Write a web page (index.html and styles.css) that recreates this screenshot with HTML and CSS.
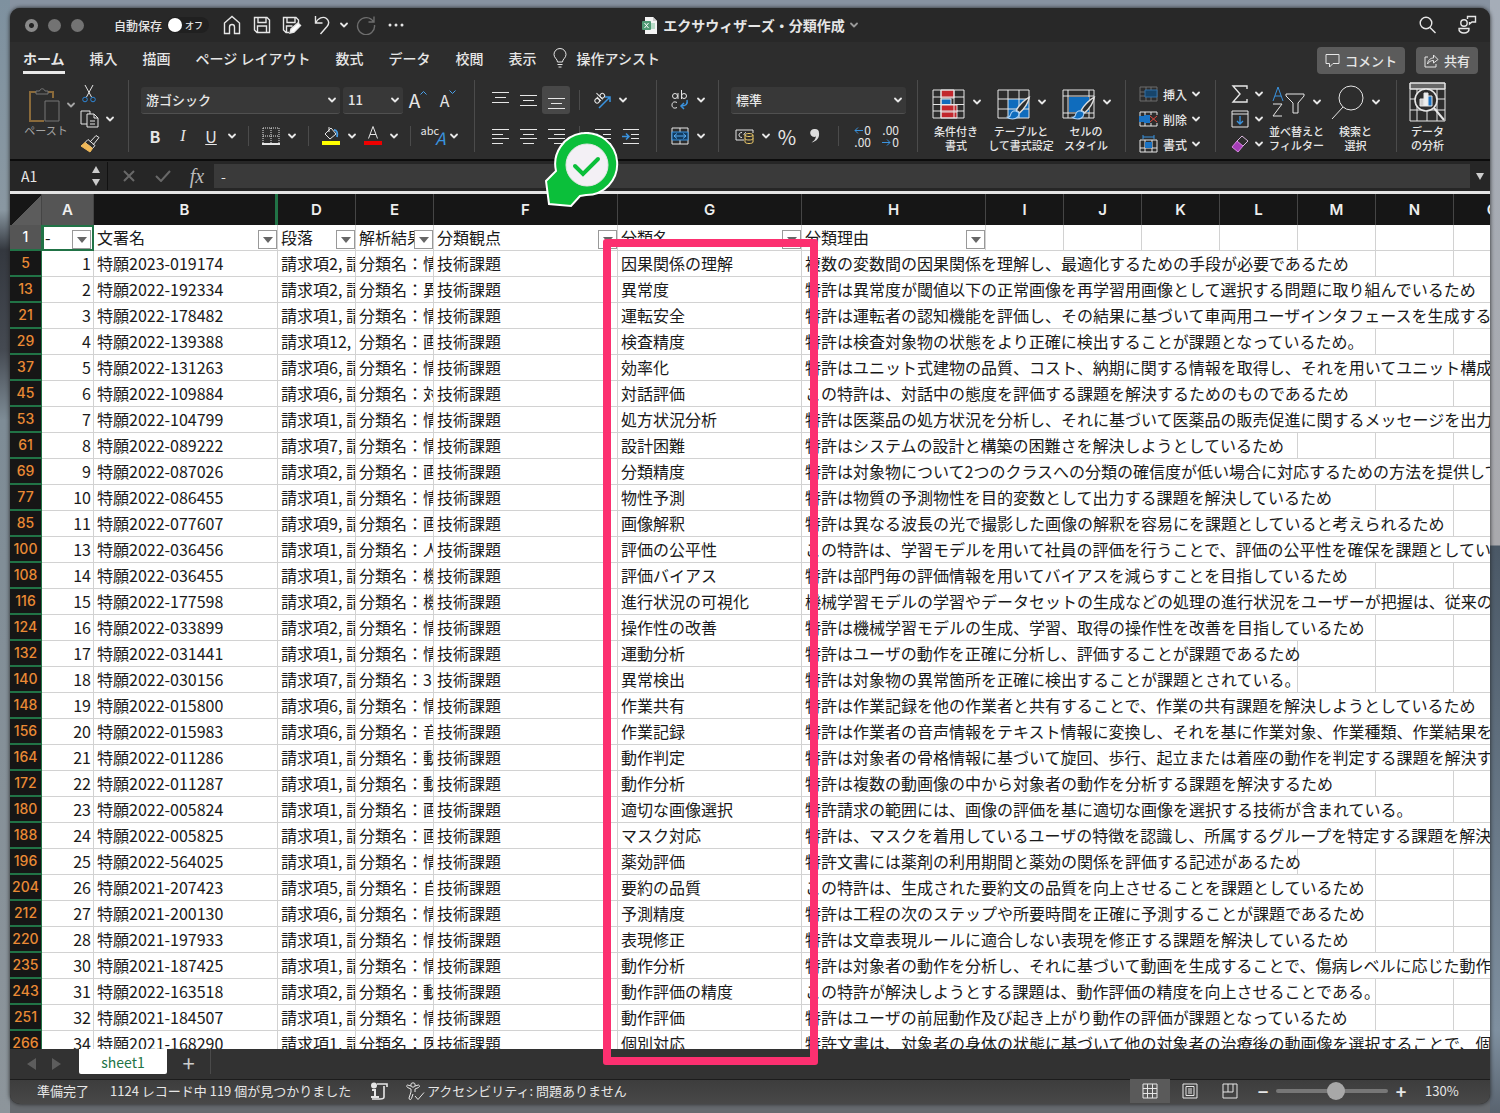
FILE: index.html
```html
<!DOCTYPE html>
<html lang="ja">
<head>
<meta charset="utf-8">
<title>エクサウィザーズ・分類作成</title>
<link rel="stylesheet" href="styles.css">
</head>
<body>
<svg class="defs" aria-hidden="true">
  <symbol id="chev" viewBox="0 0 8 8"><path d="M1 2.5 4 5.5 7 2.5" fill="none" stroke="currentColor" stroke-width="1.8" stroke-linecap="round" stroke-linejoin="round"/></symbol>
  <symbol id="brush" viewBox="0 0 24 24"><path d="M22 2C18 4 12 10 10 14l3 2.500C17 13 21 7 22 2Z" fill="#2d2d2d" stroke="#ddd" stroke-width="1.300"/><path d="M9 14.500c-3 0-4 2-4.500 4-.3 1.500-1.500 2-3 2 2 2 8 2.500 10-.5 1-1.500 1-3 .5-4Z" fill="#0f6cbd" stroke="#a9d0f5" stroke-width="1"/></symbol>
</svg>
<div class="window">
  <header class="titlebar">
    <div class="title-left">
      <div class="lights"><span></span><span></span><span></span></div>
      <label class="autosave">自動保存<span class="toggle"><input type="checkbox"><i></i><small>オフ</small></span></label>
      <button class="tool" aria-label="ホーム画面"><svg width="18" height="20" viewBox="0 0 18 20"><path d="M1.500 8 9 1.500 16.500 8v10.500h-5V12a2.500 2.500 0 0 0-5 0v6.500h-5Z"/></svg></button>
      <button class="tool" aria-label="保存"><svg width="18" height="18" viewBox="0 0 18 18"><path d="M1.500 1.500H14L16.500 4v12.500H4L1.500 14ZM5 1.500v5h8v-5M4.500 16.500V10h9v6.500"/></svg></button>
      <button class="tool" aria-label="名前を付けて保存"><svg width="20" height="18" viewBox="0 0 20 18"><path d="M7 16.500H4L1.500 14V1.500H14L16.500 4v3M5 1.500v5h8v-5M4.500 16V10h6"/><path d="m8 17 1-4 7-6 2.500 2.500-6.500 6.500Z" fill="#fff"/></svg></button>
      <button class="tool" aria-label="元に戻す"><svg width="16" height="20" viewBox="0 0 16 20"><path d="M1.500 1v7H8.500M1.500 8C4 3 9 1 12.500 3.500c3 2.500 2.500 5.500.5 8L6.500 19"/></svg></button>
      <button class="ch" aria-label="履歴"><svg><use href="#chev"/></svg></button>
      <button class="tool dim" aria-label="やり直し"><svg width="20" height="20" viewBox="0 0 20 20"><path d="M18 1.500V7h-5.500M17.500 7A8.500 8.500 0 1 0 18.500 10"/></svg></button>
      <button class="tool" aria-label="その他"><svg width="16" height="4" viewBox="0 0 16 4"><path d="M2 2h.01M8 2h.01M14 2h.01" stroke-width="3" stroke-linecap="round"/></svg></button>
    </div>
    <h1><svg width="16" height="17" viewBox="0 0 16 17"><path d="M3 0h8l4 4v13H3Z" fill="#f4f4f4"/><path d="M11 0v4h4" fill="#ccc"/><path d="M5 6h8v6H5Z" fill="#b9dcc8"/><rect y="4" width="9" height="9" rx="1" fill="#4f9a74"/><path d="m2.500 6 4 5m0-5-4 5" stroke="#fff"/></svg>エクサウィザーズ・分類作成<svg class="c"><use href="#chev"/></svg></h1>
    <div class="title-right">
      <button class="tool" aria-label="検索"><svg width="18" height="18" viewBox="0 0 18 18"><circle cx="7" cy="7" r="5.800"/><path d="m11 11.500 5.500 5.500"/></svg></button>
      <button class="tool" aria-label="プレゼンス"><svg width="20" height="20" viewBox="0 0 20 20"><circle cx="7" cy="8" r="3.200"/><path d="M2 13.500h10c1 6-11 6-10 0ZM10.500 4V1.500h8V7H15l-2.500 2V7"/></svg></button>
    </div>
  </header>

  <nav class="tabs">
    <a href="#" class="on">ホーム</a><a href="#">挿入</a><a href="#">描画</a><a href="#">ページ レイアウト</a><a href="#">数式</a><a href="#">データ</a><a href="#">校閲</a><a href="#">表示</a>
    <a href="#" class="assist"><svg width="14" height="20" viewBox="0 0 14 20"><path d="M4.500 14c0-3-3.500-4-3.500-7.500a6 6 0 0 1 12 0C13 10 9.500 11 9.500 14ZM4.500 16.500h5M5.500 19h3"/></svg>操作アシスト</a>
    <div class="actions">
      <button class="act"><svg width="15" height="15" viewBox="0 0 15 15"><path d="M1 1.500h13v9H8L4.500 14v-3.500H1Z"/></svg>コメント</button>
      <button class="act"><svg width="15" height="15" viewBox="0 0 15 15"><path d="M4 4H1v10h11v-3M3.500 11C4 7 6.500 5 9.500 5V2l4.500 4.500L9.500 10V7.500C7 7.500 5 8.500 3.500 11Z"/></svg>共有</button>
    </div>
  </nav>

  <section class="ribbon">
    <div class="group clip">
      <button class="paste"><span><svg width="34" height="35" viewBox="0 0 34 35"><path d="M8 4H2v29h14M20 4h5v6" stroke="#8a6a3a" stroke-width="2"/><path d="M8 6V3h3.500c1-3 4.500-3 5.500 0H20v3Z" stroke="#777"/><path d="M17 13h14v20H17Z" fill="#2d2d2d" stroke="#777"/></svg><svg class="c"><use href="#chev"/></svg></span>ペースト</button>
      <div class="stack">
        <button class="mini" aria-label="切り取り"><svg width="18" height="18" viewBox="0 0 18 18"><path d="m5 0 6.500 12M13 0 6.500 12"/><circle cx="5" cy="14.500" r="2.300" stroke="#2f86d6"/><circle cx="13" cy="14.500" r="2.300" stroke="#2f86d6"/></svg></button>
        <button class="mini" aria-label="コピー"><svg width="20" height="18" viewBox="0 0 20 18"><path d="M7 14H1V1h9v3M7 4h7l4 4v9H7ZM14 4v4h4M10 11h5M10 14h5"/></svg><svg class="c"><use href="#chev"/></svg></button>
        <button class="mini" aria-label="書式のコピー"><svg width="20" height="18" viewBox="0 0 20 18"><path d="m10 7 6-6.500 3 2L13 10M8 4.500l7 6-2.500 3-7.500-6Z"/><path d="m5 7.500 7.500 6L10 17 1 11Z" fill="#f0b95a" stroke="#f0b95a"/></svg></button>
      </div>
    </div>
    <div class="group font">
      <div class="row">
        <span class="select name"><select aria-label="フォント"><option>游ゴシック</option></select><svg><use href="#chev"/></svg></span>
        <span class="select size"><select aria-label="サイズ"><option>11</option></select><svg><use href="#chev"/></svg></span>
        <button class="ib big" aria-label="拡大">A<svg width="7" height="5" viewBox="0 0 7 5"><path d="m.5 4.500 3-3 3 3"/></svg></button><button class="ib mid" aria-label="縮小">A<svg width="7" height="5" viewBox="0 0 7 5"><path d="m.5.5 3 3 3-3"/></svg></button>
      </div>
      <div class="row">
        <button class="ib"><b>B</b></button><button class="ib"><i>I</i></button><button class="ib"><u>U</u></button><button class="ch" aria-label="下線"><svg><use href="#chev"/></svg></button><span class="sp"></span>
        <button class="ib" aria-label="罫線"><svg width="18" height="18" viewBox="0 0 18 18"><path d="M1 1h16v15M1 1v15M9 1v15M1 9h16" stroke-dasharray="1 1"/><path d="M0 17h18" stroke-width="2"/></svg></button><button class="ch" aria-label="罫線の種類"><svg><use href="#chev"/></svg></button><span class="sp"></span>
        <button class="ib" aria-label="塗りつぶし"><svg width="20" height="20" viewBox="0 0 20 20"><path d="m4 8 6-6 5 6-6 5ZM8 1v5"/><path d="M13 4c3 0 4 3 3 7" stroke="#4aa0ea" stroke-width="1.800"/><path d="M1 15h18v4H1Z" fill="#ff0" stroke="none"/></svg></button><button class="ch" aria-label="塗りつぶしの色"><svg><use href="#chev"/></svg></button>
        <button class="ib" aria-label="文字の色"><svg width="20" height="20" viewBox="0 0 20 20"><path d="m5.500 12.500 4.500-12 4.500 12M7 8.500h6"/><path d="M1 15h18v4H1Z" fill="#e00" stroke="none"/></svg></button><button class="ch" aria-label="色の選択"><svg><use href="#chev"/></svg></button><span class="sp"></span>
        <button class="ib ruby"><span>abc</span><em>A</em></button><button class="ch" aria-label="ふりがな"><svg><use href="#chev"/></svg></button>
      </div>
    </div>
    <div class="group align">
      <div class="row">
        <button class="ib" aria-label="上揃え"><svg width="17" height="20" viewBox="0 0 17 20"><path d="M0 2.500h17M3 7.500h11M0 12.500h17"/></svg></button><button class="ib" aria-label="中央"><svg width="17" height="20" viewBox="0 0 17 20"><path d="M0 5.500h17M3 10.500h11M0 15.500h17"/></svg></button><button class="ib on" aria-label="下揃え"><svg width="17" height="20" viewBox="0 0 17 20"><path d="M0 8.500h17M3 13.500h11M0 18.500h17"/></svg></button><span class="sp"></span>
        <button class="ib" aria-label="方向"><svg width="20" height="20" viewBox="0 0 20 20"><g transform="rotate(-45 8 8)"><circle cx="4" cy="8" r="2.300"/><path d="M6.500 5v6M9 2v9"/><circle cx="11.300" cy="8" r="2.300"/></g><path d="M7 18 18 7m-5 0h5v5" stroke="#3a93df" stroke-width="1.500"/></svg></button><button class="ch" aria-label="方向の種類"><svg><use href="#chev"/></svg></button>
      </div>
      <div class="row">
        <button class="ib" aria-label="左揃え"><svg width="17" height="17" viewBox="0 0 17 17"><path d="M0 1.500h17M0 6.500h11M0 10.500h17M0 15.500h11"/></svg></button><button class="ib" aria-label="中央揃え"><svg width="17" height="17" viewBox="0 0 17 17"><path d="M0 1.500h17M3 6.500h11M0 10.500h17M3 15.500h11"/></svg></button><button class="ib" aria-label="右揃え"><svg width="17" height="17" viewBox="0 0 17 17"><path d="M0 1.500h17M6 6.500h11M0 10.500h17M6 15.500h11"/></svg></button><span class="sp"></span>
        <button class="ib" aria-label="インデント解除"><svg width="17" height="17" viewBox="0 0 17 17"><path d="M1 1.500h16M9 6.500h8M9 10.500h8M1 15.500h16"/><path d="M7 8.500H0m3-3-3 3 3 3" stroke="#3a93df"/></svg></button><button class="ib" aria-label="インデント"><svg width="17" height="17" viewBox="0 0 17 17"><path d="M1 1.500h16M9 6.500h8M9 10.500h8M1 15.500h16"/><path d="M0 8.500h7m-3-3 3 3-3 3" stroke="#3a93df" stroke-width="1.500"/></svg></button>
      </div>
    </div>
    <div class="group wrap">
      <div class="row"><button class="ib" aria-label="折り返し"><svg width="18" height="20" viewBox="0 0 18 20"><circle cx="4" cy="6" r="2.500"/><path d="M7 3v6M10.500 0v9M6 12.500c-3-1.500-5 0-5 2.500s2 4 5 2.500"/><circle cx="13" cy="6" r="2.500"/><path d="M16 10c1 4-1 6-6 6m3-3-3 3 3 3" stroke="#3a93df" stroke-width="1.500"/></svg></button><button class="ch" aria-label="折り返しの種類"><svg><use href="#chev"/></svg></button></div>
      <div class="row"><button class="ib" aria-label="結合"><svg width="18" height="18" viewBox="0 0 18 18"><path d="M1 1h16v16H1ZM9 1v4M9 13v4"/><path d="M1 5h16v8H1Z" fill="#123b5f" stroke="#3a93df"/><path d="M3 9h12M6 6.500 3 9l3 2.500M12 6.500 15 9l-3 2.500" stroke="#57acf2"/></svg></button><button class="ch" aria-label="結合の種類"><svg><use href="#chev"/></svg></button></div>
    </div>
    <div class="group num">
      <div class="row"><span class="select fmt"><select aria-label="表示形式"><option>標準</option></select><svg><use href="#chev"/></svg></span></div>
      <div class="row">
        <button class="ib" aria-label="通貨"><svg width="20" height="18" viewBox="0 0 20 18"><path d="M9 13H1V3h17v3M7 5.500c-4 0-4 5 0 5M11 5.500C9.500 6 9 7 9 8"/><path d="M10 8v7c0 2 8 2 8 0V8c0-2-8-2-8 0c0 2 8 2 8 0M10 11.500c0 2 8 2 8 0" stroke="#f1cd6b"/></svg></button><button class="ch" aria-label="通貨の種類"><svg><use href="#chev"/></svg></button><button class="ib pct">%</button><button class="ib" aria-label="桁区切り"><svg width="10" height="16" viewBox="0 0 10 16"><path d="M5 1a4 4 0 1 0 1 7.500C5.500 11 4 13 1.500 14.500 8 13 9.500 8.500 9 5a4 4 0 0 0-4-4Z" fill="#ddd" stroke="none"/></svg></button><span class="sp"></span>
        <button class="ib dec"><span><svg width="9" height="7" viewBox="0 0 9 7"><path d="M9 3.500H1M4 .5l-3 3 3 3"/></svg>0</span><span>.00</span></button><button class="ib dec"><span>.00</span><span><svg width="9" height="7" viewBox="0 0 9 7"><path d="M0 3.500h8M5 .5l3 3-3 3"/></svg>0</span></button>
      </div>
    </div>
    <div class="group styles">
      <button class="large"><span><svg width="34" height="36" viewBox="0 0 34 36"><path d="M9 6h13v8H9Zm0 20h16v8H9Z" fill="#c2272d"/><path d="M9 15h10v6H9Z" fill="#0f6cbd"/><path d="M9 21h16v7H9Z" fill="#c2272d"/><path d="M1 6h31v28H1ZM9 6v28M22 6v28M1 13h31M1 20.500h31M1 27h31"/></svg><svg class="c"><use href="#chev"/></svg></span>条件付き<br>書式</button>
      <button class="large"><span><svg width="34" height="36" viewBox="0 0 34 36"><path d="M11 15h21v19H11Z" fill="#0f6cbd" stroke="none"/><path d="M1 6h31v28H1ZM11 6v28M22 6v28M1 15h31M1 25h31"/><use href="#brush" x="8" y="11" width="27" height="26"/></svg><svg class="c"><use href="#chev"/></svg></span>テーブルと<br>して書式設定</button>
      <button class="large"><span><svg width="34" height="36" viewBox="0 0 34 36"><path d="M1 6h31v28H1ZM6 6v28M1 12h31M27 6v28M1 29h31"/><path d="M7 13h20v15H7Z" fill="#0f6cbd" stroke="none"/><use href="#brush" x="8" y="11" width="27" height="26"/></svg><svg class="c"><use href="#chev"/></svg></span>セルの<br>スタイル</button>
    </div>
    <div class="group cells">
      <button class="line"><svg class="dim" width="19" height="18" viewBox="0 0 19 18"><path d="M1 2h17v14H1ZM1 7h17M1 11h17M7 2v14M12 2v14"/><path d="M6 5h12v7H6Z" fill="#17456b" stroke="#2f6fa6"/></svg>挿入<svg class="c"><use href="#chev"/></svg></button>
      <button class="line"><svg width="19" height="18" viewBox="0 0 19 18"><path d="M1 6V2h17v3M1 12v4h17v-3M6 2v3M12 2v3M6 13v3M12 13v3"/><path d="M0 6h7v6H0ZM5 5h6v8H5Z" fill="#1a73c4" stroke="none"/><path d="m11 6 7 6m0-6-7 6" stroke="#e0483e"/></svg>削除<svg class="c"><use href="#chev"/></svg></button>
      <button class="line"><svg width="19" height="18" viewBox="0 0 19 18"><path d="M1 5h17v12H1ZM6 5v12M13 5v12M1 13h17"/><path d="M6 7h7v6H6Z" fill="#1a73c4" stroke="none"/><path d="M4 0v4M15 0v4M4 2h11" stroke="#3a93df"/></svg>書式<svg class="c"><use href="#chev"/></svg></button>
    </div>
    <div class="group edit">
      <div class="stack">
        <button class="mini" aria-label="合計"><svg width="18" height="18" viewBox="0 0 18 18"><path d="M16 4V1H2l7 8-7 8h14v-3" stroke-width="1.400"/></svg><svg class="c"><use href="#chev"/></svg></button>
        <button class="mini" aria-label="フィル"><svg width="18" height="18" viewBox="0 0 18 18"><path d="M1 1h16v16H1ZM1 4h16"/><path d="M9 6v8m-3-3 3 3 3-3" stroke="#3a93df" stroke-width="1.400"/></svg><svg class="c"><use href="#chev"/></svg></button>
        <button class="mini" aria-label="クリア"><svg width="18" height="18" viewBox="0 0 18 18"><path d="m1 12 5-6 6 5-5 6Z" fill="#a63db8" stroke="#d58be0"/><path d="m6 6 5-5 6 5-5 5" stroke="#d9b8de"/></svg><svg class="c"><use href="#chev"/></svg></button>
      </div>
      <button class="large"><span><svg width="34" height="36" viewBox="0 0 34 36"><path d="m1 17 5-14 5 14M3 12h6" stroke="#3a93df"/><path d="M1 20h9L1 32h9"/><path d="M14 10h18v2l-6 7v10h-5V19l-7-7Z"/></svg><svg class="c"><use href="#chev"/></svg></span>並べ替えと<br>フィルター</button>
      <button class="large"><span><svg width="34" height="36" viewBox="0 0 34 36"><circle cx="20" cy="14" r="12"/><path d="M12 23 1 35"/></svg><svg class="c"><use href="#chev"/></svg></span>検索と<br>選択</button>
    </div>
    <div class="group data">
      <button class="large"><span><svg width="37" height="40" viewBox="0 0 37 40"><path d="M1 1h35v6H1Z" fill="#666"/><path d="M1 1h35v38H1ZM1 7h35M1 17h35M1 28h35M8 7v32M18 7v32M28 7v32"/><circle cx="17" cy="18" r="11" fill="#2d2d2d" stroke-width="1.600"/><path d="M11 17h4v7h-4Z" fill="#ccc"/><path d="M15 11h4v13h-4Z" fill="#eee"/><path d="M19 14h4v10h-4Z" fill="#1a73c4"/><path d="m25 26 10 12" stroke-width="2"/></svg></span>データ<br>の分析</button>
    </div>
  </section>

  <section class="formula">
    <input class="cellname" aria-label="名前ボックス" value="A1">
    <span class="spin"><i></i><i></i></span>
    <button class="fb" aria-label="キャンセル"><svg width="12" height="12" viewBox="0 0 12 12"><path d="m1 1 10 10m0-10L1 11"/></svg></button>
    <button class="fb" aria-label="入力"><svg width="16" height="12" viewBox="0 0 16 12"><path d="m1 6 5 5 9-10"/></svg></button>
    <button class="fb fx">fx</button>
    <input class="fval" aria-label="数式バー" value="-">
    <span class="more"></span>
  </section>

  <main class="sheet">
    <table>
      <colgroup><col class="w-h"><col class="w-a"><col class="w-b"><col class="w-n"><col class="w-n"><col class="w-w"><col class="w-w"><col class="w-w"><col class="w-n"><col class="w-n"><col class="w-n"><col class="w-n"><col class="w-n"><col class="w-n"><col></colgroup>
      <thead><tr><th class="corner"><th class="sel">A<th class="gap">B<th>D<th>E<th>F<th>G<th>H<th>I<th>J<th>K<th>L<th>M<th>N<th>O</tr></thead>
      <tbody>
      <tr class="heads"><th>1<td class="cur"><div>-<button aria-label="フィルター"></button></div><td><div>文署名<button aria-label="フィルター"></button></div><td><div>段落<button aria-label="フィルター"></button></div><td><div>解析結果<button aria-label="フィルター"></button></div><td><div>分類観点<button aria-label="フィルター"></button></div><td><div>分類名<button aria-label="フィルター"></button></div><td><div>分類理由<button aria-label="フィルター"></button></div><td><td><td><td><td><td><td></tr>
      <tr><th>5<td>1<td>特願2023-019174<td>請求項2, 請<td>分類名：情<td>技術課題<td>因果関係の理解<td colspan="6">複数の変数間の因果関係を理解し、最適化するための手段が必要であるため<td><td></tr>
      <tr><th>13<td>2<td>特願2022-192334<td>請求項2, 請<td>分類名：異<td>技術課題<td>異常度<td colspan="8">特許は異常度が閾値以下の正常画像を再学習用画像として選択する問題に取り組んでいるため</tr>
      <tr><th>21<td>3<td>特願2022-178482<td>請求項1, 請<td>分類名：情<td>技術課題<td>運転安全<td colspan="8">特許は運転者の認知機能を評価し、その結果に基づいて車両用ユーザインタフェースを生成すること</tr>
      <tr><th>29<td>4<td>特願2022-139388<td>請求項12,<td>分類名：画<td>技術課題<td>検査精度<td colspan="6">特許は検査対象物の状態をより正確に検出することが課題となっているため。<td><td></tr>
      <tr><th>37<td>5<td>特願2022-131263<td>請求項6, 請<td>分類名：情<td>技術課題<td>効率化<td colspan="8">特許はユニット式建物の品質、コスト、納期に関する情報を取得し、それを用いてユニット構成や</tr>
      <tr><th>45<td>6<td>特願2022-109884<td>請求項6, 請<td>分類名：対<td>技術課題<td>対話評価<td colspan="6">この特許は、対話中の態度を評価する課題を解決するためのものであるため<td><td></tr>
      <tr><th>53<td>7<td>特願2022-104799<td>請求項1, 請<td>分類名：情<td>技術課題<td>処方状況分析<td colspan="8">特許は医薬品の処方状況を分析し、それに基づいて医薬品の販売促進に関するメッセージを出力す</tr>
      <tr><th>61<td>8<td>特願2022-089222<td>請求項7, 請<td>分類名：情<td>技術課題<td>設計困難<td colspan="5">特許はシステムの設計と構築の困難さを解決しようとしているため<td><td><td></tr>
      <tr><th>69<td>9<td>特願2022-087026<td>請求項2, 請<td>分類名：画<td>技術課題<td>分類精度<td colspan="8">特許は対象物について2つのクラスへの分類の確信度が低い場合に対応するための方法を提供して</tr>
      <tr><th>77<td>10<td>特願2022-086455<td>請求項1, 請<td>分類名：情<td>技術課題<td>物性予測<td colspan="6">特許は物質の予測物性を目的変数として出力する課題を解決しているため<td><td></tr>
      <tr><th>85<td>11<td>特願2022-077607<td>請求項9, 請<td>分類名：画<td>技術課題<td>画像解釈<td colspan="7">特許は異なる波長の光で撮影した画像の解釈を容易にを課題としていると考えられるため<td></tr>
      <tr><th>100<td>13<td>特願2022-036456<td>請求項1, 請<td>分類名：人<td>技術課題<td>評価の公平性<td colspan="8">この特許は、学習モデルを用いて社員の評価を行うことで、評価の公平性を確保を課題としている</tr>
      <tr><th>108<td>14<td>特願2022-036455<td>請求項1, 請<td>分類名：機<td>技術課題<td>評価バイアス<td colspan="6">特許は部門毎の評価情報を用いてバイアスを減らすことを目指しているため<td><td></tr>
      <tr><th>116<td>15<td>特願2022-177598<td>請求項2, 請<td>分類名：機<td>技術課題<td>進行状況の可視化<td colspan="8">機械学習モデルの学習やデータセットの生成などの処理の進行状況をユーザーが把握は、従来の方</tr>
      <tr><th>124<td>16<td>特願2022-033899<td>請求項2, 請<td>分類名：情<td>技術課題<td>操作性の改善<td colspan="6">特許は機械学習モデルの生成、学習、取得の操作性を改善を目指しているため<td><td></tr>
      <tr><th>132<td>17<td>特願2022-031441<td>請求項1, 請<td>分類名：情<td>技術課題<td>運動分析<td colspan="5">特許はユーザの動作を正確に分析し、評価することが課題であるため<td><td><td></tr>
      <tr><th>140<td>18<td>特願2022-030156<td>請求項7, 請<td>分類名：3D<td>技術課題<td>異常検出<td colspan="5">特許は対象物の異常箇所を正確に検出することが課題とされている。<td><td><td></tr>
      <tr><th>148<td>19<td>特願2022-015800<td>請求項6, 請<td>分類名：情<td>技術課題<td>作業共有<td colspan="8">特許は作業記録を他の作業者と共有することで、作業の共有課題を解決しようとしているため</tr>
      <tr><th>156<td>20<td>特願2022-015983<td>請求項6, 請<td>分類名：音<td>技術課題<td>作業記録<td colspan="8">特許は作業者の音声情報をテキスト情報に変換し、それを基に作業対象、作業種類、作業結果を特</tr>
      <tr><th>164<td>21<td>特願2022-011286<td>請求項1, 請<td>分類名：動<td>技術課題<td>動作判定<td colspan="8">特許は対象者の骨格情報に基づいて旋回、歩行、起立または着座の動作を判定する課題を解決する</tr>
      <tr><th>172<td>22<td>特願2022-011287<td>請求項1, 請<td>分類名：動<td>技術課題<td>動作分析<td colspan="6">特許は複数の動画像の中から対象者の動作を分析する課題を解決するため<td><td></tr>
      <tr><th>180<td>23<td>特願2022-005824<td>請求項1, 請<td>分類名：画<td>技術課題<td>適切な画像選択<td colspan="7">特許請求の範囲には、画像の評価を基に適切な画像を選択する技術が含まれている。<td></tr>
      <tr><th>188<td>24<td>特願2022-005825<td>請求項1, 請<td>分類名：画<td>技術課題<td>マスク対応<td colspan="8">特許は、マスクを着用しているユーザの特徴を認識し、所属するグループを特定する課題を解決</tr>
      <tr><th>196<td>25<td>特願2022-564025<td>請求項1, 請<td>分類名：情<td>技術課題<td>薬効評価<td colspan="5">特許文書には薬剤の利用期間と薬効の関係を評価する記述があるため<td><td><td></tr>
      <tr><th>204<td>26<td>特願2021-207423<td>請求項5, 請<td>分類名：自<td>技術課題<td>要約の品質<td colspan="6">この特許は、生成された要約文の品質を向上させることを課題としているため<td><td></tr>
      <tr><th>212<td>27<td>特願2021-200130<td>請求項6, 請<td>分類名：情<td>技術課題<td>予測精度<td colspan="6">特許は工程の次のステップや所要時間を正確に予測することが課題であるため<td><td></tr>
      <tr><th>220<td>28<td>特願2021-197933<td>請求項1, 請<td>分類名：情<td>技術課題<td>表現修正<td colspan="6">特許は文章表現ルールに適合しない表現を修正する課題を解決しているため<td><td></tr>
      <tr><th>235<td>30<td>特願2021-187425<td>請求項1, 請<td>分類名：情<td>技術課題<td>動作分析<td colspan="8">特許は対象者の動作を分析し、それに基づいて動画を生成することで、傷病レベルに応じた動作の</tr>
      <tr><th>243<td>31<td>特願2022-163518<td>請求項2, 請<td>分類名：動<td>技術課題<td>動作評価の精度<td colspan="6">この特許が解決しようとする課題は、動作評価の精度を向上させることである。<td><td></tr>
      <tr><th>251<td>32<td>特願2021-184507<td>請求項1, 請<td>分類名：情<td>技術課題<td>動作評価<td colspan="6">特許はユーザの前屈動作及び起き上がり動作の評価が課題となっているため<td><td></tr>
      <tr><th>266<td>34<td>特願2021-168290<td>請求項1, 請<td>分類名：医<td>技術課題<td>個別対応<td colspan="8">特許文書は、対象者の身体の状態に基づいて他の対象者の治療後の動画像を選択することで、個々</tr>
      </tbody>
    </table>
  </main>

  <div class="sheettabs">
    <button class="nav" aria-label="前のシート"><i></i></button><button class="nav next" aria-label="次のシート"><i></i></button>
    <button class="stab">sheet1</button><button class="add">+</button>
  </div>

  <footer class="status">
    <span class="ready">準備完了</span><span class="found">1124 レコード中 119 個が見つかりました</span>
    <svg class="rec" width="18" height="18" viewBox="0 0 18 18"><path d="M7 2h10v3M14 4v11c0 2-2 2-4 2H2" stroke-width="1.600"/><circle cx="4" cy="3.500" r="3" fill="#e6e6e6" stroke="none"/><path d="M2 8h3v6M1 15h8" stroke-width="2"/></svg>
    <svg width="19" height="19" viewBox="0 0 19 19"><circle cx="7" cy="3" r="2.200"/><path d="M5 4 1.500 3C0 3.500 1 5 1.500 5.500L5 7v3l-2 6c0 2 2 2 2.500.5L7 12M9 4l3.500-1c1.500.5 1 2 0 2.500L9 7v3M9 14l3 3.500 6-7"/></svg>
    <span>アクセシビリティ: 問題ありません</span>
    <div class="views">
      <button class="view on" aria-label="標準"><svg width="16" height="16" viewBox="0 0 16 16"><path d="M1 1h14v14H1ZM1 5.500h14M1 10.500h14M5.500 1v14M10.500 1v14"/></svg></button>
      <button class="view" aria-label="ページ レイアウト"><svg width="16" height="16" viewBox="0 0 16 16"><path d="M1 1h14v14H1ZM4 3.500h8v9H4ZM6 6h4M6 8h4M6 10h4"/></svg></button>
      <button class="view" aria-label="改ページ"><svg width="16" height="16" viewBox="0 0 16 16"><path d="M1 1h14v14H1ZM6 1v8M11 1v8H1"/></svg></button>
      <button class="zb">−</button><input type="range" aria-label="ズーム" min="0" max="100" value="54"><button class="zb">+</button>
      <span class="pctv">130%</span>
    </div>
  </footer>

  <div class="mark"></div>
  <svg class="pin" width="76" height="78" viewBox="0 0 76 78"><path d="M11 39A31 31 0 1 1 41 63L35 64 26 74 4 72 1 49Z" fill="#0bbf3a" stroke="#fff" stroke-width="2"/><circle cx="42" cy="33" r="21" fill="#f3f0f5"/><path d="m30 34 8 8 15-15" fill="none" stroke="#0bbf3a" stroke-width="4" stroke-linecap="round"/></svg>
</div>
</body>
</html>
```

FILE: styles.css
```css
* { box-sizing: border-box; }
body {
  margin: 0; padding: 8px 10px 9px; height: 100vh; overflow: hidden;
  font-family: "Noto Sans CJK JP", sans-serif; color: #e6e6e6;
  background:
    linear-gradient(#a5adb8, #a9a9ad 545px, #4a5866 546px, #7f90a0 1030px, #59636f) right / 10px 100% no-repeat,
    linear-gradient(#7e919f, #8a98a2 210px, #34383f 250px, #454a52 350px, #7e8c96 420px, #8d959b) left / 10px 100% no-repeat,
    linear-gradient(#8792a0 50%, #666a6f 50%);
}
button, input, select { font: inherit; color: inherit; background: none; border: 0; padding: 0; margin: 0; }
svg { fill: none; stroke: currentColor; flex: none; }
.defs { position: absolute; width: 0; height: 0; }
.c, .ch svg { width: 8px; height: 8px; }

.window {
  position: relative; height: 100%; display: flex; flex-direction: column; overflow: hidden;
  border-radius: 10px; background: #2d2d2d; box-shadow: 0 0 4px #222;
}

/* title bar */
.titlebar { height: 34px; flex: none; display: grid; grid-template-columns: 1fr auto 1fr; align-items: center; background: #282828; }
.title-left, .title-right, .lights, .autosave, .toggle { display: flex; align-items: center; }
.title-left { padding-left: 15px; }
.lights { gap: 10px; margin-right: 30px; }
.lights span { width: 13px; height: 13px; border-radius: 50%; background: #737373; }
.lights span:first-child { background: radial-gradient(#222 2px, #8a8a8a 3px); }
.autosave { font-size: 12px; font-weight: 500; margin-right: 8px; }
.toggle { width: 42px; height: 16px; margin-left: 5px; border-radius: 8px; background: #202020; }
.toggle input { position: absolute; opacity: 0; }
.toggle i { width: 14px; height: 14px; border-radius: 50%; background: #fff; margin: 0 3px 0 1px; }
.toggle small { font-size: 9px; }
.tool { width: 30px; display: flex; justify-content: center; }
.tool svg { stroke-width: 1.4; }
.dim { color: #6d6d6d; }
.ch { width: 14px; height: 26px; display: flex; align-items: center; justify-content: center; }
h1 { margin: 0; font-size: 14px; font-weight: 700; display: flex; align-items: center; gap: 5px; }
h1 svg:first-child { stroke: none; }
h1 .c { color: #999; }
.title-right { justify-content: flex-end; gap: 9px; padding-right: 8px; }

/* ribbon tabs */
.tabs { height: 36px; flex: none; display: flex; gap: 25px; padding-left: 13px; font-size: 14px; font-weight: 500; }
.tabs a { color: inherit; text-decoration: none; line-height: 32px; height: 32px; white-space: nowrap; }
.tabs .on { font-weight: 700; border-bottom: 3px solid #e8e8e8; }
.tabs .assist { display: flex; align-items: center; gap: 9px; margin-left: -8px; }
.actions { margin-left: auto; display: flex; gap: 11px; padding: 5px 12px 0 0; }
.act { height: 27px; padding: 0 8px; display: flex; align-items: center; gap: 5px; border-radius: 4px; background: #5b5b5b; font-size: 13px; font-weight: 500; }

/* ribbon */
.ribbon { height: 83px; flex: none; display: flex; padding-top: 2px; border-bottom: 2px solid #0c0c0c; font-size: 12px; }
.group { flex: none; height: 72px; border-right: 1px solid #4b4b4b; display: flex; }
.group:last-child { border: 0; }
.clip { width: 119px; padding-left: 15px; gap: 12px; }
.font, .align, .num, .wrap, .cells { flex-direction: column; }
.font { width: 346px; padding: 6px 0 0 12px; gap: 8px; }
.align { width: 182px; padding: 6px 0 0 11px; gap: 8px; }
.wrap { width: 62px; padding: 6px 0 0 9px; gap: 8px; }
.num { width: 199px; padding: 6px 0 0 12px; gap: 8px; }
.styles { width: 208px; padding-left: 6px; }
.cells { width: 90px; padding: 5px 0 0 13px; gap: 7px; }
.edit { width: 181px; padding-left: 14px; }
.data { padding-left: 12px; }
.row { display: flex; height: 28px; align-items: center; }
.ib { width: 28px; height: 28px; display: flex; align-items: center; justify-content: center; font-size: 16px; }
.ib.on { background: #484848; border-radius: 3px; }
.sp { width: 18px; height: 20px; background: linear-gradient(#4b4b4b, #4b4b4b) center / 1px 100% no-repeat; }
.ib i { font-family: "Liberation Serif", serif; }
.big, .mid { width: 30px; font-size: 19px; line-height: 20px; }
.mid { font-size: 16px; }
.big svg, .mid svg { color: #4aa0ea; align-self: flex-start; margin-top: 4px; }
.pct { font-size: 20px; }
.ruby { font-size: 11px; align-items: flex-start; }
.ruby em { font-size: 17px; color: #3a93df; line-height: 32px; margin-left: -4px; }
.ruby span { line-height: 16px; }
.dec { flex-direction: column; font-size: 12px; line-height: 12px; align-items: flex-end; padding-right: 4px; }
.dec span { display: flex; align-items: center; height: 12px; gap: 1px; }
.dec svg { color: #3a93df; }
.select { position: relative; display: block; height: 27px; border-radius: 3px; background: #383838; border-bottom: 1px solid #505050; }
.select select { appearance: none; width: 100%; height: 26px; padding-left: 5px; font-size: 13px; font-weight: 500; }
.select svg { position: absolute; right: 4px; top: 9px; width: 8px; height: 8px; pointer-events: none; }
.name { width: 199px; margin-right: 3px; }
.size { width: 60px; }
.fmt { width: 175px; }
.stack { display: flex; flex-direction: column; gap: 7px; padding-top: 5px; }
.mini { display: flex; align-items: center; gap: 6px; height: 18px; min-width: 34px; }
.mini svg:first-child { margin-left: 1px; }
.paste, .large { display: flex; flex-direction: column; align-items: center; line-height: 14px; font-weight: 500; white-space: nowrap; }
.paste { width: 42px; font-size: 11px; color: #a5a5a5; font-weight: 400; padding-top: 7px; }
.paste span, .large span { display: flex; align-items: center; gap: 5px; }
.paste span { margin: 0 -8px 0 2px; height: 36px; }
.large { padding-top: 2px; font-size: 11px; }
.large span { height: 41px; margin-bottom: 2px; }
.large .c { margin-left: 2px; }
.styles .large { width: 64px; }
.styles .large:nth-child(2) { width: 66px; }
.edit .large { width: 59px; }
.edit .stack + .large { margin-left: 3px; }
.line { display: flex; align-items: center; gap: 5px; height: 18px; font-size: 12px; font-weight: 500; }

/* formula bar */
.formula { height: 30px; flex: none; display: flex; align-items: center; background: #262626; font-size: 14px; }
.cellname { width: 82px; padding-left: 11px; height: 28px; }
.spin { width: 16px; height: 28px; display: flex; flex-direction: column; justify-content: center; gap: 6px; border-right: 1px solid #111; }
.spin i, .more { border: 4px solid transparent; border-bottom: 7px solid #ccc; border-top: 0; width: 0; }
.spin i + i, .more { border-top: 7px solid #ccc; border-bottom: 0; }
.fb { width: 34px; display: flex; justify-content: center; color: #686868; }
.fb svg { stroke-width: 2; }
.formula .spin + .fb { margin-left: 4px; }
.fx { font-family: "Liberation Serif", serif; font-style: italic; font-size: 20px; color: #bbb; }
.fval { flex: 1; height: 24px; background: #3a3a3a; padding-left: 7px; }
.more { margin: 0 6px; }

/* worksheet */
.sheet { flex: 1; min-height: 0; overflow: hidden; background: #fff; border-top: 3px solid #e4e4e4; color: #1a1a1a; }
table { width: 100%; min-width: 1522px; table-layout: fixed; border-collapse: separate; border-spacing: 0; font-size: 16px; }
.w-h { width: 32px; }
.w-a { width: 52px; }
.w-b { width: 184px; }
.w-n { width: 78px; }
.w-w { width: 184px; }
th { padding: 0; font-family: Inter, sans-serif; font-weight: 600; text-align: center; background: #161616; color: #eee; }
thead th { height: 31px; font-size: 15px; border-right: 1px solid #454545; }
thead .sel { background: #555; }
thead .gap { border-right: 3px solid #217346; }
.corner { background: linear-gradient(135deg, #161616 52%, #5c5c5c 52%); }
tbody th { font-size: 14px; font-weight: 500; color: #ea8a35; line-height: 24px; border-bottom: 2px solid #217346; border-right: 1px solid #217346; }
td { height: 26px; line-height: 25px; padding: 0 0 0 3px; white-space: nowrap; overflow: hidden; border-right: 1px solid #d2d2d2; border-bottom: 1px solid #d2d2d2; }
td[colspan="5"] { overflow: visible; }
tbody td:nth-child(2) { text-align: right; padding-right: 2px; }
.heads th { background: #555; color: #fff; }
.heads div { display: flex; align-items: center; height: 25px; overflow: hidden; position: relative; }
.heads button { position: absolute; right: 0; top: 5px; width: 19px; height: 19px; border: 1px solid #999; background: #fff; display: grid; place-items: center; }
.heads button::after { content: ""; border: 5px solid transparent; border-top: 6px solid #666; border-bottom: 0; }
.heads .cur { outline: 2px solid #217346; outline-offset: -2px; }

/* sheet tabs and status bar */
.sheettabs { height: 30px; flex: none; display: flex; background: #323232; }
.nav { width: 25px; height: 30px; display: grid; place-items: center; margin-left: 9px; }
.nav + .nav { margin-left: 0; }
.nav i { border: 6px solid transparent; border-right: 9px solid #5d5d5d; border-left: 0; }
.next i { border-right: 0; border-left: 9px solid #5d5d5d; }
.stab { width: 88px; height: 25px; margin-left: 10px; background: #fff; color: #217346; font-size: 14px; line-height: 24px; border-radius: 0 0 2px 2px; }
.add { width: 44px; height: 25px; font-size: 22px; line-height: 24px; color: #ccc; border-right: 1px solid #4a4a4a; }
.status { height: 25px; flex: none; display: flex; align-items: center; font-size: 13px; line-height: 20px; border-top: 1px solid #1c1c1c; background: linear-gradient(#3d3d3d, #484848); padding: 0 0 2px 27px; }
.ready { width: 73px; }
.found { width: 250px; white-space: nowrap; }
.rec { margin: 0 18px 0 10px; }
.rec + svg { margin-right: 2px; }
.views { margin-left: auto; display: flex; align-items: center; height: 100%; }
.view { width: 40px; height: 24px; display: grid; place-items: center; }
.view.on { background: #5a5a5a; }
.zb { width: 26px; font-size: 18px; line-height: 20px; font-weight: 700; }
.views input { appearance: none; width: 112px; height: 4px; border-radius: 2px; background: #777; }
.views input::-webkit-slider-thumb { appearance: none; width: 18px; height: 18px; border-radius: 50%; background: #a8a8a8; }
.pctv { width: 76px; padding-left: 11px; }

/* annotations laid over the window */
.mark { position: absolute; left: 593px; top: 231px; bottom: 39px; width: 215px; border: 8px solid #fc3070; border-radius: 3px; }
.pin { position: absolute; left: 535px; top: 124px; }
```
